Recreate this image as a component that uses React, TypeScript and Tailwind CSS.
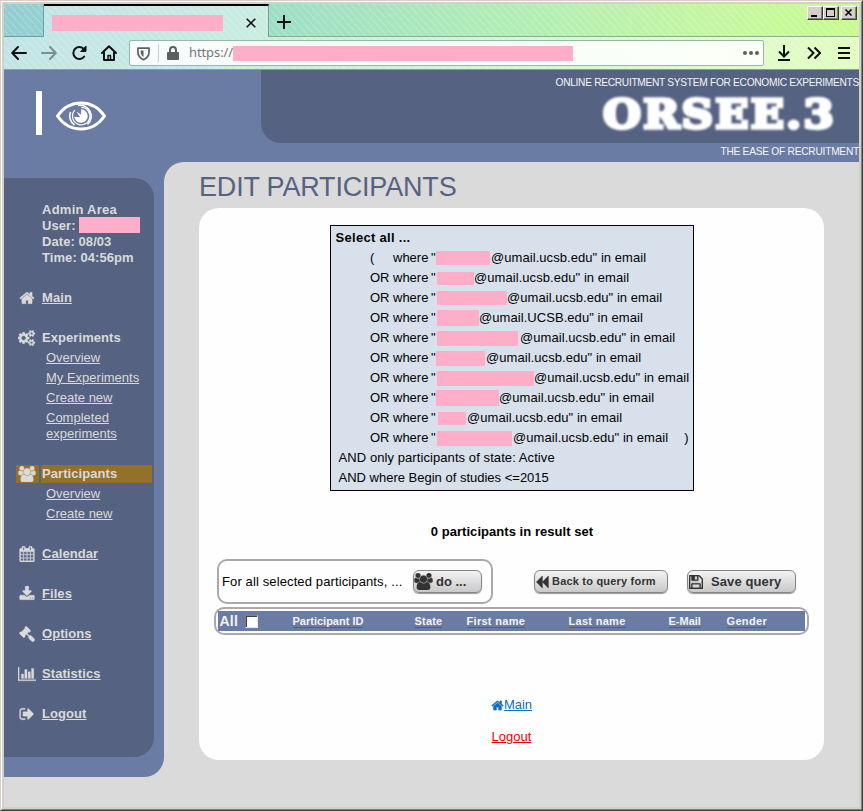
import type { ReactNode } from 'react';

const ICONS = {
  home: ['0 0 1792 1792', 'M1472 992v480q0 26-19 45t-45 19h-384v-384h-256v384h-384q-26 0-45-19t-19-45v-480q0-1 .5-3t.5-3l575-474 575 474q1 2 1 6zm223-69l-62 74q-8 9-21 11h-3q-13 0-21-7l-692-577-692 577q-12 8-24 7-13-2-21-11l-62-74q-8-10-7-23.5t11-21.5l719-599q32-26 76-26t76 26l244 204v-195q0-14 9-23t23-9h192q14 0 23 9t9 23v408l219 182q10 8 11 21.5t-7 23.5z'],
  cogs: ['0 0 1920 1792', 'M832 896q0-106-75-181t-181-75-181 75-75 181 75 181 181 75 181-75 75-181zm768 512q0-52-38-90t-90-38-90 38-38 90q0 53 37.5 90.5t90.5 37.5 90.5-37.5 37.5-90.5zm0-1024q0-52-38-90t-90-38-90 38-38 90q0 53 37.5 90.5t90.5 37.5 90.5-37.5 37.5-90.5zm-384 421v185q0 10-7 19.5t-16 10.5l-155 24q-11 35-32 76 34 48 90 115 7 10 7 20 0 12-7 19-23 30-82.5 89.5t-78.5 59.5q-11 0-21-7l-115-90q-37 19-77 31-11 108-23 155-7 24-30 24h-186q-11 0-20-7.5t-10-17.5l-23-153q-34-10-75-31l-118 89q-7 7-20 7-11 0-21-8-144-133-144-160 0-9 7-19 10-14 41-53t47-61q-23-44-35-82l-152-24q-10-1-17-9.5t-7-19.5v-185q0-10 7-19.5t16-10.5l155-24q11-35 32-76-34-48-90-115-7-11-7-20 0-12 7-20 22-30 82-89t79-59q11 0 21 7l115 90q34-18 77-32 11-108 23-154 7-24 30-24h186q11 0 20 7.5t10 17.5l23 153q34 10 75 31l118-89q8-7 20-7 11 0 21 8 144 133 144 160 0 9-7 19-12 16-42 54t-45 60q23 48 34 82l152 23q10 2 17 10.5t7 19.5zm640 533v140q0 16-149 31-12 27-30 52 51 113 51 138 0 4-4 7-122 71-124 71-8 0-46-47t-52-68q-20 2-30 2t-30-2q-14 21-52 68t-46 47q-2 0-124-71-4-3-4-7 0-25 51-138-18-25-30-52-149-15-149-31v-140q0-16 149-31 13-29 30-52-51-113-51-138 0-4 4-7 4-2 35-20t59-34 30-16q8 0 46 46.5t52 67.5q20-2 30-2t30 2q51-71 92-112l6-2q4 0 124 70 4 3 4 7 0 25-51 138 17 23 30 52 149 15 149 31zm0-1024v140q0 16-149 31-12 27-30 52 51 113 51 138 0 4-4 7-122 71-124 71-8 0-46-47t-52-68q-20 2-30 2t-30-2q-14 21-52 68t-46 47q-2 0-124-71-4-3-4-7 0-25 51-138-18-25-30-52-149-15-149-31v-140q0-16 149-31 13-29 30-52-51-113-51-138 0-4 4-7 4-2 35-20t59-34 30-16q8 0 46 46.5t52 67.5q20-2 30-2t30 2q51-71 92-112l6-2q4 0 124 70 4 3 4 7 0 25-51 138 17 23 30 52 149 15 149 31z'],
  users: ['0 0 1920 1792', 'M593 896q-162 5-265 128h-134q-82 0-138-40.5t-56-118.5q0-353 124-353 6 0 43.5 21t97.5 42.5 119 21.5q67 0 133-23-5 37-5 66 0 139 81 256zm1071 637q0 120-73 189.5t-194 69.5h-874q-121 0-194-69.5t-73-189.5q0-53 3.5-103.5t14-109 26.5-108.5 43-97.5 62-81 85.5-53.5 111.5-20q10 0 43 21.5t73 48 107 48 135 21.5 135-21.5 107-48 73-48 43-21.5q61 0 111.5 20t85.5 53.5 62 81 43 97.5 26.5 108.5 14 109 3.5 103.5zm-1024-1277q0 106-75 181t-181 75-181-75-75-181 75-181 181-75 181 75 75 181zm704 384q0 159-112.5 271.5t-271.5 112.5-271.5-112.5-112.5-271.5 112.5-271.5 271.5-112.5 271.5 112.5 112.5 271.5zm576 225q0 78-56 118.5t-138 40.5h-134q-103-123-265-128 81-117 81-256 0-29-5-66 66 23 133 23 59 0 119-21.5t97.5-42.5 43.5-21q124 0 124 353zm-128-609q0 106-75 181t-181 75-181-75-75-181 75-181 181-75 181 75 75 181z'],
  calendar: ['0 0 1792 1792', 'M192 1664h288v-288h-288v288zm352 0h320v-288h-320v288zm-352-352h288v-320h-288v320zm352 0h320v-320h-320v320zm-352-384h288v-288h-288v288zm736 736h320v-288h-320v288zm-384-736h320v-288h-320v288zm768 736h288v-288h-288v288zm-384-352h320v-320h-320v320zm-352-864v-288q0-13-9.5-22.5t-22.5-9.5h-64q-13 0-22.5 9.5t-9.5 22.5v288q0 13 9.5 22.5t22.5 9.5h64q13 0 22.5-9.5t9.5-22.5zm736 864h288v-320h-288v320zm-384-384h320v-288h-320v288zm384 0h288v-288h-288v288zm32-480v-288q0-13-9.5-22.5t-22.5-9.5h-64q-13 0-22.5 9.5t-9.5 22.5v288q0 13 9.5 22.5t22.5 9.5h64q13 0 22.5-9.5t9.5-22.5zm384-64v1280q0 52-38 90t-90 38h-1408q-52 0-90-38t-38-90v-1280q0-52 38-90t90-38h128v-96q0-66 47-113t113-47h64q66 0 113 47t47 113v96h384v-96q0-66 47-113t113-47h64q66 0 113 47t47 113v96h128q52 0 90 38t38 90z'],
  download: ['0 0 1792 1792', 'M1344 1344q0-26-19-45t-45-19-45 19-19 45 19 45 45 19 45-19 19-45zm256 0q0-26-19-45t-45-19-45 19-19 45 19 45 45 19 45-19 19-45zm128-224v320q0 40-28 68t-68 28h-1472q-40 0-68-28t-28-68v-320q0-40 28-68t68-28h465l135 136q58 56 136 56t136-56l136-136h464q40 0 68 28t28 68zm-325-569q17 41-14 70l-448 448q-18 19-45 19t-45-19l-448-448q-31-29-14-70 17-39 59-39h256v-448q0-26 19-45t45-19h256q26 0 45 19t19 45v448h256q42 0 59 39z'],
  gavel: ['0 0 1792 1792', 'M1771 1536q0 53-37 90l-107 108q-39 37-91 37-53 0-90-37l-363-364q-38-36-38-90 0-53 43-96l-256-256-126 126q-14 14-34 14t-34-14q2 2 12.5 12t12.5 13 10 11.5 10 13.5 6 13.5 5.5 16.5 1.5 18q0 38-28 68-3 3-16.5 18t-19 20.5-18.5 16.5-22 15.5-22 9-26 4.5q-40 0-68-28l-408-408q-28-28-28-68 0-13 4.5-26t9-22 15.5-22 16.5-18.5 20.5-19 18-16.5q30-28 68-28 10 0 18 1.5t16.5 5.5 13.5 6 13.5 10 11.5 10 13 12.5 12 12.5q-14-14-14-34t14-34l348-348q14-14 34-14t34 14q-2-2-12.5-12t-12.5-13-10-11.5-10-13.5-6-13.5-5.5-16.5-1.5-18q0-38 28-68 3-3 16.5-18t19-20.5 18.5-16.5 22-15.5 22-9 26-4.5q40 0 68 28l408 408q28 28 28 68 0 13-4.5 26t-9 22-15.5 22-16.5 18.5-20.5 19-18 16.5q-30 28-68 28-10 0-18-1.5t-16.5-5.5-13.5-6-13.5-10-11.5-10-13-12.5-12-12.5q14 14 14 34t-14 34l-126 126 256 256q43-43 96-43 52 0 91 37l363 363q37 39 37 91z'],
  chart: ['0 0 2048 1792', 'M640 896v512h-256v-512h256zm384-512v1024h-256v-1024h256zm1024 1152v128h-2048v-1536h128v1408h1920zm-640-896v768h-256v-768h256zm384-384v1152h-256v-1152h256z'],
  signout: ['0 0 1792 1792', 'M704 1440q0 4 1 20t.5 26.5-3 23.5-10 19.5-20.5 6.5h-320q-119 0-203.5-84.5t-84.5-203.5v-704q0-119 84.5-203.5t203.5-84.5h320q13 0 22.5 9.5t9.5 22.5q0 4 1 20t.5 26.5-3 23.5-10 19.5-20.5 6.5h-320q-66 0-113 47t-47 113v704q0 66 47 113t113 47h312l11.5 1 11.5 3 8 5.5 7 9 2 13.5zm928-544q0 26-19 45l-544 544q-19 19-45 19t-45-19-19-45v-288h-448q-26 0-45-19t-19-45v-384q0-26 19-45t45-19h448v-288q0-26 19-45t45-19 45 19l544 544q19 19 19 45z'],
  backward: ['0 0 1792 1792', 'M1683 141q19-19 32-13t13 32v1472q0 26-13 32t-32-13l-710-710q-9-9-13-19v710q0 26-13 32t-32-13l-710-710q-19-19-19-45t19-45l710-710q19-19 32-13t13 32v710q4-10 13-19z'],
  floppy: ['128 128 1536 1536', 'M512 1536h768v-384h-768v384zm896 0h128v-896q0-14-10-38.5t-20-34.5l-281-281q-10-10-34-20t-39-10v416q0 40-28 68t-68 28h-576q-40 0-68-28t-28-68v-416h-128v1280h128v-416q0-40 28-68t68-28h832q40 0 68 28t28 68v416zm-384-928v-320q0-13-9.5-22.5t-22.5-9.5h-192q-13 0-22.5 9.5t-9.5 22.5v320q0 13 9.5 22.5t22.5 9.5h192q13 0 22.5-9.5t9.5-22.5zm640 32v928q0 40-28 68t-68 28h-1344q-40 0-68-28t-28-68v-1344q0-40 28-68t68-28h928q40 0 88 20t76 48l280 280q28 28 48 76t20 88z'],
} as const;

type IconName = keyof typeof ICONS;

function Icon({ name, className }: { name: IconName; className: string }) {
  return (
    <svg viewBox={ICONS[name][0]} className={`shrink-0 ${className}`} fill="currentColor" stroke="currentColor" strokeWidth="36">
      <path d={ICONS[name][1]} />
    </svg>
  );
}

function WinButton({ children, className = '' }: { children: ReactNode; className?: string }) {
  return (
    <button className={`h-[14px] w-4 border border-t-white border-l-white border-r-[#404040] border-b-[#404040] bg-[#d4d0c8] shadow-[inset_-1px_-1px_0_#808080] ${className}`}>
      <svg viewBox="0 0 14 12" className="h-3 w-[14px]" fill="none" stroke="#000" shapeRendering="crispEdges">
        {children}
      </svg>
    </button>
  );
}

function BrowserChrome() {
  return (
    <div className="relative h-[66px] shrink-0 border-b border-[#7ea692] bg-[repeating-linear-gradient(48deg,transparent_0_4px,rgba(255,255,255,0.17)_4px_5.3px),linear-gradient(97deg,#93cdd2_0%,#97d8cc_22%,#b0edb6_58%,#c6f7a0_85%,#c8fb8c_100%)]">
      <div className="flex h-[33px]">
        <div className="w-10 border-r border-b border-[#6fa09f]" />
        <div className="flex w-[225px] items-center border-t-2 border-r border-t-black border-r-[#6fa09f] bg-white/45 pl-2">
          <div className="mt-[3px] h-4 w-[171px] bg-[#ffaec9]" />
          <svg viewBox="0 0 10 10" className="mt-0.5 ml-[23px] size-[10px]" stroke="#111" strokeWidth="1.6">
            <path d="M.7.7l8.6 8.6M9.3.7L.7 9.3" />
          </svg>
        </div>
        <div className="flex grow items-start justify-between border-b border-[#86b389] pl-2">
          <svg viewBox="0 0 14 14" className="mt-[11px] size-[14px]" stroke="#111" strokeWidth="2">
            <path d="M7 0v14M0 7h14" />
          </svg>
          <div className="mt-0.5 mr-0.5 flex">
            <WinButton><path d="M3 9h6" strokeWidth="2" /></WinButton>
            <WinButton><path d="M2.5 1.5h8v8h-8zM2 2h9" /></WinButton>
            <WinButton className="ml-0.5"><path d="M3.5 2.5l6 6M9.5 2.5l-6 6" strokeWidth="1.6" shapeRendering="auto" /></WinButton>
          </div>
        </div>
      </div>
      <div className="flex h-8 items-center bg-white/45 pr-2 pl-[7px]">
        <svg viewBox="0 0 16 16" className="size-4" fill="none" stroke="#111" strokeWidth="2" strokeLinecap="round" strokeLinejoin="round">
          <path d="M15 8H1.5M7 2L1.2 8 7 14" />
        </svg>
        <svg viewBox="0 0 16 16" className="ml-[14px] size-4 opacity-40" fill="none" stroke="#111" strokeWidth="2" strokeLinecap="round" strokeLinejoin="round">
          <path d="M1 8h13.500M9 2l5.800 6L9 14" />
        </svg>
        <svg viewBox="0 0 16 16" className="ml-[14px] size-4" fill="none" stroke="#111" strokeWidth="2" strokeLinecap="round" strokeLinejoin="round">
          <path d="M13.200 11.500A6 6 0 1 1 13 4.200" />
          <path d="M15 1.500v5H10z" fill="#111" strokeWidth="1" />
        </svg>
        <svg viewBox="0 0 16 16" className="ml-[14px] size-4" fill="none" stroke="#111" strokeWidth="2" strokeLinecap="round" strokeLinejoin="round">
          <path d="M1 8l7-6.800L15 8M3 7.500V15h10V7.500" />
          <path d="M7 15v-4.500h2.500V15" strokeWidth="1.500" />
        </svg>
        <div className="ml-3 flex h-[26px] w-[635px] items-center rounded-[2px] border border-[#96b8a5] bg-white/85 pl-[7px]">
          <svg viewBox="0 0 14 16" className="h-[15px] w-[13px]" fill="none" stroke="#5c5f5e" strokeWidth="1.800">
            <path d="M1 2.200h12v4c0 4.500-2.500 7-6 8.600-3.500-1.600-6-4.100-6-8.600z" strokeLinejoin="round" />
            <path d="M7 4.700v7c-2-1.200-3-3-3-5.200V4.700z" fill="#5c5f5e" stroke="none" />
          </svg>
          <div className="ml-2 h-[18px] w-px bg-[#cfcfca]" />
          <svg viewBox="0 0 12 14" className="ml-2 h-[14px] w-3">
            <path d="M3 7V4a3 3 0 0 1 6 0v3" fill="none" stroke="#5c5f5e" strokeWidth="2" />
            <rect y="6" width="12" height="8" rx="1" fill="#5c5f5e" />
          </svg>
          <span className="ml-[10px] w-11 font-['Noto_Sans',sans-serif] text-[13px] tracking-[-0.1px] text-[#777]">https://</span>
          <div className="h-[15px] w-[340px] bg-[#ffaec9]" />
          <div className="ml-auto flex gap-0.5 pr-1">
            <i className="size-1 rounded-full bg-[#5d625d]" />
            <i className="size-1 rounded-full bg-[#5d625d]" />
            <i className="size-1 rounded-full bg-[#5d625d]" />
          </div>
        </div>
        <svg viewBox="0 0 12 16" className="ml-[14px] h-4 w-3" fill="none" stroke="#111" strokeWidth="2">
          <path d="M6 0v11M1 6.500l5 5 5-5M0 15h12" />
        </svg>
        <svg viewBox="0 0 14 14" className="ml-[17px] size-[14px]" fill="none" stroke="#111" strokeWidth="2">
          <path d="M1 1.500L6.500 7 1 12.500M7.500 1.500L13 7l-5.500 5.500" />
        </svg>
        <svg viewBox="0 0 12 12" className="ml-[17px] size-3" stroke="#111" strokeWidth="2">
          <path d="M0 1h12M0 6h12M0 11h12" />
        </svg>
      </div>
    </div>
  );
}

function Header() {
  return (
    <header className="flex h-[92px] shrink-0 justify-between bg-[#6b7ca4] text-[#f5f5f5]">
      <div className="flex pl-8">
        <div className="mt-[21px] h-11 w-[6px] bg-white" />
        <svg viewBox="0 0 50 30" className="mt-[31px] ml-[14px] h-[30px] w-[50px]" fill="none" stroke="#fff">
          <path d="M1.500 15C7 7 15 2 25 2s18 5 23.500 13C43 23 35 28 25 28S7 23 1.500 15z" strokeWidth="3" />
          <path d="M14.500 11a11 11 0 0 0 4 13M22 4.500a11 11 0 0 1 9.500 19" strokeWidth="1.600" />
          <path d="M18.800 9.200a8.700 8.700 0 1 0 6.500-2.800" strokeWidth="1.200" />
          <path d="M25 8.200a6.800 6.800 0 1 1-6.800 7.600l5.800 .4-3.600-5.600 4.600 3z" fill="#fff" stroke="none" />
        </svg>
      </div>
      <div className="w-[598px] text-right">
        <div className="h-[73px] rounded-bl-[20px] bg-[#566282] pt-[7px]">
          <div className="h-3 text-[10.200px] leading-3 tracking-[-0.3px] whitespace-nowrap">ONLINE RECRUITMENT SYSTEM FOR ECONOMIC EXPERIMENTS</div>
          <div className="mt-[5px] mr-[23px] h-10 origin-right scale-x-[1.09] font-['DejaVu_Serif',serif] text-[40px] leading-10 font-bold tracking-[2px] text-white blur-[0.8px] [-webkit-text-stroke:3.5px_white]">ORSEE.3</div>
        </div>
        <div className="pt-[3px] text-[10.200px] leading-3 tracking-[-0.25px]">THE EASE OF RECRUITMENT</div>
      </div>
    </header>
  );
}

function MenuItem({ icon, label, active, plain }: { icon: IconName; label: string; active?: boolean; plain?: boolean }) {
  const wide = icon === 'chart' || icon === 'users' || icon === 'cogs';
  return (
    <div className="flex h-5 items-center gap-0.5">
      <div className={`flex h-[18px] w-[23px] items-center justify-center pr-px ${active ? 'bg-[#93712a]' : ''}`}>
        <Icon name={icon} className={wide ? 'h-4 w-[18px]' : 'size-4'} />
      </div>
      <div className={`flex h-[18px] w-[111px] items-center pl-px font-bold tracking-[0.07px] ${active ? 'bg-[#93712a]' : ''}`}>
        <span className={active || plain ? '' : 'underline'}>{label}</span>
      </div>
    </div>
  );
}

function SubItem({ label }: { label: string }) {
  return <a className="block py-0.5 pl-[30px] leading-4 underline">{label}</a>;
}

function Sidebar() {
  return (
    <aside className="h-[615px] w-40 shrink-0 rounded-br-[20px] bg-[#6b7ca4] pt-4">
      <nav className="flex h-[579px] w-[150px] flex-col gap-5 rounded-r-[20px] bg-[#566282] pt-6 pl-3 text-[13px] text-[#dadada]">
        <div className="mb-0.5 pl-[26px] leading-4 font-bold tracking-[0.07px]">
          <div className="tracking-[0.25px]">Admin Area</div>
          <div className="flex h-4 gap-[3px]">User: <span className="-mt-px h-4 w-[61px] bg-[#ffaec9]" /></div>
          <div>Date: 08/03</div>
          <div>Time: 04:56pm</div>
        </div>
        <MenuItem icon="home" label="Main" />
        <div>
          <MenuItem icon="cogs" label="Experiments" plain />
          <SubItem label="Overview" />
          <SubItem label="My Experiments" />
          <SubItem label="Create new" />
          <a className="block w-[110px] py-0.5 pl-[30px] leading-4 underline">Completed experiments</a>
        </div>
        <div>
          <MenuItem icon="users" label="Participants" active />
          <SubItem label="Overview" />
          <SubItem label="Create new" />
        </div>
        <MenuItem icon="calendar" label="Calendar" />
        <MenuItem icon="download" label="Files" />
        <MenuItem icon="gavel" label="Options" />
        <MenuItem icon="chart" label="Statistics" />
        <MenuItem icon="signout" label="Logout" />
      </nav>
    </aside>
  );
}

type Term = { pad: number; mask: number; maskHeight: number; slot: number; domain: string; close?: boolean };

const TERMS: Term[] = [
  { pad: 0, mask: 54, maskHeight: 14, slot: 55, domain: 'umail.ucsb.edu' },
  { pad: 1, mask: 37, maskHeight: 13, slot: 38, domain: 'umail.ucsb.edu' },
  { pad: 1, mask: 70, maskHeight: 14, slot: 71, domain: 'umail.ucsb.edu' },
  { pad: 1, mask: 42, maskHeight: 16, slot: 43, domain: 'umail.UCSB.edu' },
  { pad: 1, mask: 81, maskHeight: 15, slot: 84, domain: 'umail.ucsb.edu' },
  { pad: 0, mask: 49, maskHeight: 15, slot: 50, domain: 'umail.ucsb.edu' },
  { pad: 1, mask: 97, maskHeight: 15, slot: 98, domain: 'umail.ucsb.edu' },
  { pad: 0, mask: 63, maskHeight: 16, slot: 63, domain: 'umail.ucsb.edu' },
  { pad: 2, mask: 28, maskHeight: 13, slot: 31, domain: 'umail.ucsb.edu' },
  { pad: 1, mask: 75, maskHeight: 15, slot: 77, domain: 'umail.ucsb.edu', close: true },
];

function QueryBox() {
  return (
    <div className="h-[266px] w-[364px] border border-black bg-[#d8e0eb] pl-[5px] text-[13px] leading-5 whitespace-nowrap">
      <div className="pt-0.5 font-bold tracking-[0.3px]">Select all ...</div>
      {TERMS.map((t, i) => (
        <div key={i} className="flex h-5 items-center pl-[34.5px]">
          <span className="w-[23px]">{i === 0 ? '(' : 'OR'}</span>
          <span className="w-[38px]">where</span>
          <span className="w-[4.5px]">"</span>
          <span className="flex" style={{ width: t.slot, paddingLeft: t.pad }}>
            <span className="bg-[#ffaec9]" style={{ width: t.mask, height: t.maskHeight }} />
          </span>
          <span className="pl-[0.5px] tracking-[0.06px]">@{t.domain}" in email</span>
          {t.close && <span className="ml-4">)</span>}
        </div>
      ))}
      <div className="pl-[3px] tracking-[0.08px]">AND only participants of state: Active</div>
      <div className="pl-[3px]">AND where Begin of studies &lt;=2015</div>
    </div>
  );
}

function Button({ className, children }: { className: string; children: ReactNode }) {
  return (
    <button className={`flex h-[23px] items-center rounded-[6px] border border-[#858585] bg-linear-to-b from-[#f3f3f3] to-[#c9c9c9] font-bold whitespace-nowrap text-[#333] shadow-[0_1px_1px_#999] ${className}`}>
      {children}
    </button>
  );
}

function Th({ children, className }: { children: string; className: string }) {
  return (
    <div className={className}>
      <span className="inline-block border-b border-[#0b72d0] leading-3">{children}</span>
    </div>
  );
}

function Main() {
  return (
    <div className="grow bg-[linear-gradient(#6b7ca4_20px,#dadada_20px)]">
      <main className="h-full rounded-tl-[20px] bg-[#dadada] pl-[35px]">
        <h1 className="h-[46px] pt-2.5 text-[27px] leading-[30px] tracking-[-0.18px] whitespace-nowrap text-[#566282]">EDIT PARTICIPANTS</h1>
        <section className="flex h-[552px] w-[625px] flex-col items-center rounded-[20px] bg-[#fefefe] pt-[17px] text-black">
          <QueryBox />
          <div className="mt-[31px] h-5 pl-px text-[13px] leading-5 font-bold tracking-[0.05px]">0 participants in result set</div>
          <div className="mt-[17px] flex h-[45px] w-full pl-[18px]">
            <div className="flex h-[45px] w-[276px] items-center rounded-[10px] border-2 border-[#a9a9a9] pl-[3px] text-[13px]">
              <span className="w-[191px] tracking-[0.12px]">For all selected participants, ...</span>
              <Button className="w-[69px] text-[13px]">
                <Icon name="users" className="mr-[3px] h-[17px] w-[19px]" />do ...
              </Button>
            </div>
            <Button className="mt-[11px] ml-[41px] w-[134px] text-[11px] tracking-[0.2px]">
              <Icon name="backward" className="mr-[3px] size-[14px]" />Back to query form
            </Button>
            <Button className="mt-[11px] ml-[19px] w-[109px] pl-px text-[13px] tracking-[0.1px]">
              <Icon name="floppy" className="mr-2 size-[14px]" />Save query
            </Button>
          </div>
          <div className="mt-[3px] mr-px h-7 w-[595px] rounded-[10px] border-2 border-[#a9a9a9] p-0.5">
            <div className="flex h-5 items-center bg-[#6b7ca4] text-[11px] leading-[13px] font-bold tracking-[0.2px] text-[#f4f4f4]">
              <div className="w-[27px] pl-0.5 text-[14px]">All</div>
              <div className="mr-[35px] size-[13px] border border-t-[#808080] border-l-[#808080] border-r-[#e8e6e0] border-b-[#e8e6e0] bg-white shadow-[inset_1px_1px_0_#404040]" />
              <Th className="w-[122px] tracking-normal">Participant ID</Th>
              <Th className="w-[52px]">State</Th>
              <Th className="w-[102px] tracking-[0.3px]">First name</Th>
              <Th className="w-[100px] tracking-[0.3px]">Last name</Th>
              <Th className="w-[58px] tracking-normal">E-Mail</Th>
              <Th className="tracking-[0.35px]">Gender</Th>
            </div>
          </div>
          <a className="mt-[62px] flex h-4 items-center text-[13px] leading-4 text-[#0b6fc4]">
            <Icon name="home" className="size-[13px]" /><span className="underline">Main</span>
          </a>
          <a className="mt-4 text-[13px] leading-4 text-[#f00000] underline">Logout</a>
        </section>
      </main>
    </div>
  );
}

export default function App() {
  return (
    <div className="h-[811px] w-[863px] overflow-hidden border border-t-[#d4d0c8] border-l-[#d4d0c8] border-r-[#404040] border-b-[#404040] font-['Liberation_Sans',Arial,sans-serif]">
      <div className="h-full border border-t-white border-l-white border-r-[#808080] border-b-[#808080]">
        <div className="flex h-full flex-col border-2 border-[#d4d0c8] bg-[#dadada]">
          <BrowserChrome />
          <Header />
          <div className="flex grow">
            <Sidebar />
            <Main />
          </div>
        </div>
      </div>
    </div>
  );
}
